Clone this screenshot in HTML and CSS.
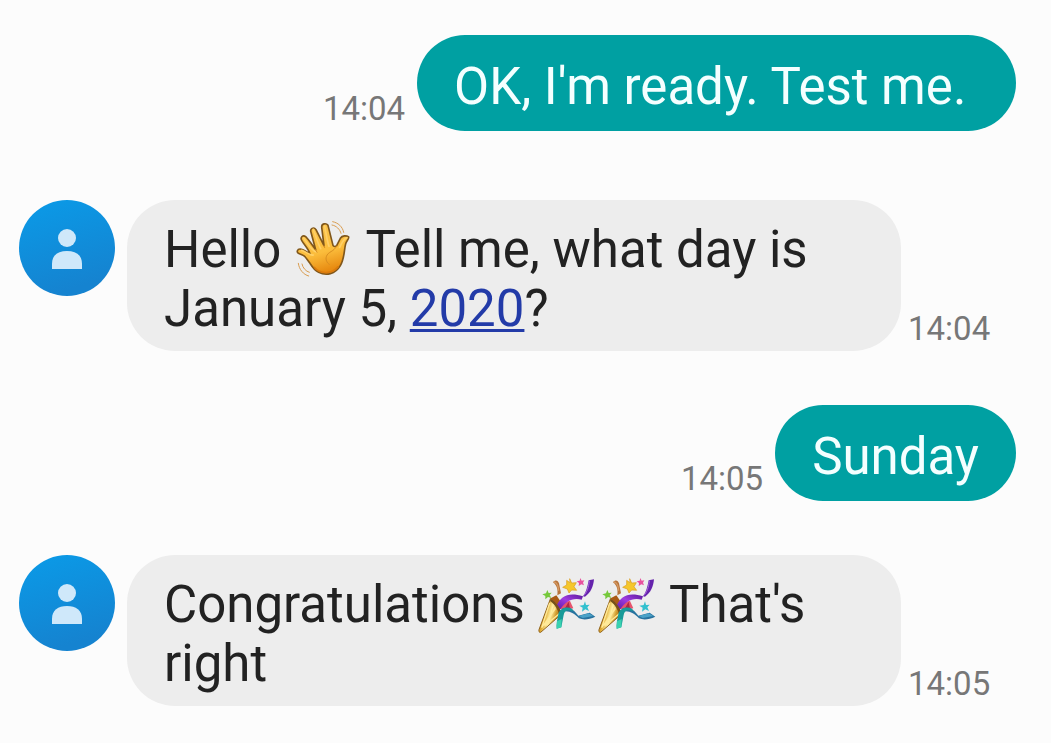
FILE: index.html
```
<!DOCTYPE html>
<html lang="en">
<head>
    <meta charset="UTF-8">
    <meta name="viewport" content="width=device-width, initial-scale=1.0">
    <title>Messages</title>
    <link rel="stylesheet" href="styles.css">
</head>
<body>
    <!-- Shared drawings -->
    <svg class="sprite" aria-hidden="true">
        <defs>
            <linearGradient id="avatar-fill" x1="0" y1="0" x2="0.3" y2="1">
                <stop offset="0" stop-color="#0a9be8"/>
                <stop offset="1" stop-color="#1583d0"/>
            </linearGradient>
            <linearGradient id="skin" x1="0" y1="0" x2="0.3" y2="1">
                <stop offset="0" stop-color="#fbc650"/>
                <stop offset="0.65" stop-color="#fbbd3c"/>
                <stop offset="1" stop-color="#e88c12"/>
            </linearGradient>
            <linearGradient id="cone" x1="0" y1="0.3" x2="1" y2="0.7">
                <stop offset="0" stop-color="#a8700f"/>
                <stop offset="0.3" stop-color="#e2ad35"/>
                <stop offset="0.5" stop-color="#fff0a4"/>
                <stop offset="0.7" stop-color="#d29b2b"/>
                <stop offset="1" stop-color="#80500e"/>
            </linearGradient>
            <linearGradient id="purple" x1="0" y1="1" x2="1" y2="0">
                <stop offset="0" stop-color="#5c1ca5"/>
                <stop offset="0.5" stop-color="#a03be0"/>
                <stop offset="1" stop-color="#5a1a9b"/>
            </linearGradient>
        </defs>
        <symbol id="person" viewBox="0 0 96 96">
            <circle cx="48" cy="48" r="48" fill="url(#avatar-fill)"/>
            <circle cx="48" cy="38" r="9" fill="#cfe8fa"/>
            <path d="M33 69V64C33 55 39 51 48 51S63 55 63 64V69Z" fill="#cfe8fa"/>
        </symbol>
        <symbol id="wave" viewBox="24 24 180 180">
            <path d="M72 160C62 147 57 138 51 136L37 130C31 126 34 117 42 117C53 117 63 127 72 131C67 117 55 105 47 91C42 82 51 73 59 80C70 91 80 108 89 119L75 67C71 56 83 49 90 59L114 107L107 51C107 41 120 38 126 46L141 106C143 110 148 111 152 107L163 85C169 76 181 76 188 81C189 88 182 91 179 101C174 119 176 145 163 167C148 193 120 198 98 187C85 181 79 171 72 160Z" fill="url(#skin)" stroke="#80571b" stroke-width="5" stroke-linejoin="round"/>
            <path d="M47 121C61 125 71 137 82 135M53 84C66 103 76 121 91 126M82 58C89 79 96 101 104 116M116 48C120 70 123 92 129 109M183 83C173 86 166 101 161 112" fill="none" stroke="#ffd067" stroke-width="5" stroke-linecap="round"/>
            <path d="M89 119L93 127M114 107L116 113M152 108C144 126 126 124 121 140C118 149 123 159 130 163" fill="none" stroke="#d88d20" stroke-width="3" stroke-linecap="round"/>
            <path d="M84 171C100 191 134 196 157 170" fill="none" stroke="#db7b0c" stroke-width="5"/>
            <path d="M140 35C156 38 170 50 173 67M138 45C151 47 162 58 165 70M37 160C39 178 52 194 68 198M48 162C50 173 59 184 70 187" fill="none" stroke="#d99c4f" stroke-width="3" stroke-linecap="round"/>
        </symbol>
        <symbol id="party" viewBox="33 21 180 180">
            <path d="M81 49C88 40 96 43 99 52L105 82L94 88C96 72 94 59 81 49Z" fill="#b8753c"/>
            <path d="M83 48C91 47 97 58 98 74" fill="none" stroke="#d59a65" stroke-width="4"/>
            <path d="M71 98L91 88L103 105L96 128Z" fill="#a95b16"/>
            <path d="M98 127C108 113 119 104 132 105L142 127L116 132Z" fill="#e6546c"/>
            <path d="M116 128L128 107L132 128Z" fill="#ad2846"/>
            <path d="M91 121C104 89 129 77 171 91L167 101C138 94 119 107 103 130Z" fill="url(#purple)"/>
            <path d="M171 91C180 80 184 64 188 43L204 40C202 62 194 81 177 92Z" fill="#6523ac"/>
            <path d="M190 44C188 66 182 79 173 89" fill="none" stroke="#aa68de" stroke-width="3"/>
            <path d="M73 99C85 106 101 127 107 144L44 199C39 200 38 196 39 191Z" fill="url(#cone)" stroke="#91631c" stroke-width="3"/>
            <path d="M71 111L47 185L88 128M88 124L56 179L100 143" fill="none" stroke="#ffe999" stroke-width="4"/>
            <path d="M74 100C89 107 102 124 107 143L100 148C96 130 86 114 72 105Z" fill="#765019"/>
            <path d="M108 128C130 120 143 131 157 149L191 140L208 152C190 160 174 163 159 157C145 142 129 132 108 137Z" fill="#28739f"/>
            <path d="M158 150L188 142L202 150L170 156Z" fill="#4ba2c7"/>
            <path d="M98 140C106 124 124 121 139 129L141 136C125 129 115 135 113 147L106 184L92 188C90 176 94 158 98 140Z" fill="#199b99"/>
            <path d="M93 166L107 159L106 184L92 188Z" fill="#39d1af"/>
            <path d="M131 38L137 51L151 50L144 62L152 73L137 72L129 81L124 69L110 64L122 57L122 43L132 50Z" fill="#f5c72c" stroke="#d99b1c" stroke-width="2"/>
            <path d="M163 36L167 44L175 43L171 50L174 58L166 55L158 60L159 51L152 46L161 44Z" fill="#e9519f"/>
            <path d="M64 72L68 81L77 80L71 87L76 96L66 93L58 100L58 90L49 85L60 82Z" fill="#76c83b"/>
            <path d="M177 106L180 117L191 116L184 124L189 135L178 130L168 137L170 125L160 119L173 117Z" fill="#31c0ce"/>
        </symbol>
    </svg>

    <main class="chat">
        <div class="message outgoing">
            <time class="time">14:04</time>
            <p class="bubble">OK, I'm ready. Test me.&nbsp;</p>
        </div>

        <div class="message incoming">
            <svg class="avatar" role="img" aria-label="Contact"><use href="#person"/></svg>
            <p class="bubble">Hello <svg class="emoji" role="img" aria-label="Waving hand"><use href="#wave"/></svg> Tell me, what day is January 5, <a href="#">2020</a>?</p>
            <time class="time">14:04</time>
        </div>

        <div class="message outgoing">
            <time class="time">14:05</time>
            <p class="bubble">Sunday</p>
        </div>

        <div class="message incoming">
            <svg class="avatar" role="img" aria-label="Contact"><use href="#person"/></svg>
            <p class="bubble">Congratulations <svg class="emoji" role="img" aria-label="Party popper"><use href="#party"/></svg><svg class="emoji" role="img" aria-label="Party popper"><use href="#party"/></svg> That's right</p>
            <time class="time">14:05</time>
        </div>
    </main>
</body>
</html>
```
FILE: styles.css
```
body {
    margin: 0;
    background-color: #fcfcfc;
    font-family: Roboto, "Liberation Sans", sans-serif;
}

.sprite {
    position: absolute;
    width: 0;
    height: 0;
}

.chat {
    padding: 35px 35px 35px 19px;
}

.message {
    display: flex;
    align-items: flex-end;
    gap: 12px;
    margin-bottom: 54px;
}

.message:first-child {
    margin-bottom: 69px;
}

.message:last-child {
    margin-bottom: 0;
}

.outgoing {
    justify-content: flex-end;
}

.bubble {
    box-sizing: border-box;
    margin: 0;
    border-radius: 48px;
    font-size: 51px;
    line-height: 59px;
}

.outgoing .bubble {
    padding: 22px 37px 15px;
    background-color: #00a0a2;
    color: #f4ffff;
}

.incoming .bubble {
    flex: 0 1 774px;
    padding: 20px 37px 13px;
    background-color: #ededed;
    color: #222;
}

.bubble a {
    color: #233ba8;
    text-decoration-thickness: 3px;
    text-underline-offset: 3px;
}

.avatar {
    flex: none;
    align-self: flex-start;
    width: 96px;
    height: 96px;
}

/* The negative margins keep the emoji from stretching its line */
.emoji {
    width: 60px;
    height: 60px;
    margin: -10px 0;
    vertical-align: -1px;
}

.time {
    color: #777;
    font-size: 33px;
    line-height: 44px;
}

.incoming .time {
    margin-left: -5px;
}
```
